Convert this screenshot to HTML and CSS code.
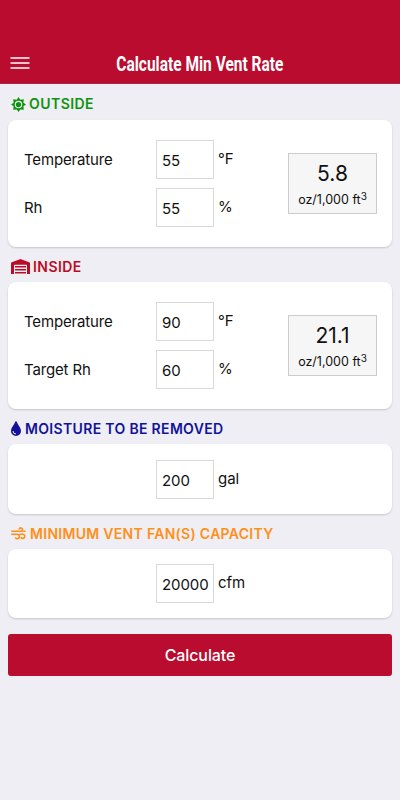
FILE: index.html
```html
<!DOCTYPE html>
<html lang="en">
<head>
<meta charset="utf-8">
<title>Calculate Min Vent Rate</title>
<link rel="stylesheet" href="styles.css">
</head>
<body>
<header class="bar">
  <svg class="menu" viewBox="0 0 20 12" width="20" height="12"><path d="M.5 1h19M.5 6h19M.5 11h19"/></svg>
  <h1 class="title"><span>Calculate Min Vent Rate</span></h1>
</header>
<main>
  <h2 class="heading green">
    <svg class="sun" viewBox="0 0 24 24" width="15" height="15"><path fill="currentColor" fill-rule="evenodd" d="M12 0l2.800 4.200L20.500 3.500l-.7 5.700L24 12l-4.200 2.800.7 5.700-5.700-.7L12 24l-2.800-4.200-5.700.7.700-5.700L0 12l4.200-2.800-.7-5.700 5.700.700zM12 6a6 6 0 100 12 6 6 0 000-12z"/><circle cx="12" cy="12" r="4.200" fill="currentColor"/></svg>
    <span class="label outside">OUTSIDE</span>
  </h2>
  <section class="card climate">
    <div class="rows">
      <label class="row"><span class="name">Temperature</span><input value="55"><span class="unit">°F</span></label>
      <label class="row"><span class="name">Rh</span><input value="55"><span class="unit">%</span></label>
    </div>
    <div class="result"><strong>5.8</strong><small>oz/1,000 ft<sup>3</sup></small></div>
  </section>

  <h2 class="heading red">
    <svg viewBox="0 0 19 15" width="19" height="15"><path fill="currentColor" d="M0 4.500Q0 3.600.8 3.200L9 .2q.5-.2 1 0l8.200 3q.8.400.8 1.300V15h-3V6.500q0-.7-.7-.7H3.700q-.7 0-.7.700V15H0zM4 7h11v1.500H4zM4 10h11v1.500H4zM4 13h11v1.500H4z"/></svg>
    <span class="label inside">INSIDE</span>
  </h2>
  <section class="card climate">
    <div class="rows">
      <label class="row"><span class="name">Temperature</span><input value="90"><span class="unit">°F</span></label>
      <label class="row"><span class="name">Target Rh</span><input value="60"><span class="unit">%</span></label>
    </div>
    <div class="result"><strong>21.1</strong><small>oz/1,000 ft<sup>3</sup></small></div>
  </section>

  <h2 class="heading blue">
    <svg viewBox="0 0 10 15" width="10" height="15"><path fill="currentColor" d="M4.200.7Q5 0 5.800.7C6.500 3.700 10 6.400 10 9.900a5 5 0 01-10 0C0 6.400 3.500 3.700 4.200.7z"/><path class="shine" d="M2 10a3 3 0 003 3"/></svg>
    <span class="label moisture">MOISTURE TO BE REMOVED</span>
  </h2>
  <section class="card single">
    <label class="row"><span class="name"></span><input value="200"><span class="unit">gal</span></label>
  </section>

  <h2 class="heading orange">
    <svg class="wind" viewBox="0 0 15 13" width="15" height="13"><path d="M.8 4.300h9a1.700 1.700 0 10-1.600-2.300M.8 7.300h5.400a2.200 2.200 0 11-1.600 3.700M9 7.200h2.700a2.100 2.100 0 11-1.600 3.500M12.500 4.300h1.500"/></svg>
    <span class="label fans">MINIMUM VENT FAN(S) CAPACITY</span>
  </h2>
  <section class="card single last">
    <label class="row"><span class="name"></span><input value="20000"><span class="unit">cfm</span></label>
  </section>
  <button class="submit">Calculate</button>
</main>
</body>
</html>
```
FILE: styles.css
```css
* { box-sizing: border-box; }
body {
  margin: 0;
  min-height: 800px;
  background: #efeef4;
  color: #111;
  font-family: Inter, "Liberation Sans", sans-serif;
}
.bar {
  height: 84px;
  padding: 42px 10px 0;
  display: grid;
  grid-template-columns: 20px 1fr 20px;
  align-items: center;
  background: #b90c2e;
  border-bottom: 1px solid #a72e40;
}
.menu { stroke: #fff; stroke-width: 1.5; fill: none; }
.title {
  margin: 0;
  padding-top: 2px;
  display: flex;
  justify-content: center;
  font: 700 20px/24px Roboto, sans-serif;
  color: #fff;
  white-space: nowrap;
}
.title span { transform: scaleX(.775); }
main { padding: 0 8px; display: flex; flex-direction: column; }
.heading {
  height: 36px;
  margin: 0;
  padding: 4px 0 0 3px;
  display: flex;
  align-items: center;
  gap: 4px;
  font-size: 14px;
  line-height: 18px;
  font-weight: 600;
  white-space: nowrap;
}
.heading svg { flex: none; }
.green { color: #0e930e; gap: 3px; }
.red { color: #bd0a25; height: 35px; gap: 3px; }
.blue { color: #12129a; height: 35px; }
.orange { color: #ff9017; height: 35px; }
.shine { fill: none; stroke: #efeef4; }
.wind { fill: none; stroke: currentColor; stroke-width: 1.6; stroke-linecap: round; }
.label { letter-spacing: .33px; }
.outside, .inside { letter-spacing: .45px; }
.fans { letter-spacing: .3px; }
.card {
  background: #fff;
  border-radius: 8px;
  box-shadow: 0 1px 2px rgba(0, 0, 0, .18);
}
.climate {
  height: 127px;
  padding: 20px 15px 20px 16px;
  display: flex;
  justify-content: space-between;
  align-items: center;
}
.rows { display: grid; gap: 9px; }
.row {
  display: grid;
  grid-template-columns: 132px 58px auto;
  align-items: center;
  font-size: 15px;
  line-height: 20px;
}
.name { padding-top: 1px; letter-spacing: -.15px; }
.single { height: 70px; padding: 16px; }
.last { height: 69px; padding-top: 15px; }
input {
  width: 58px;
  height: 39px;
  padding: 1px 0 0 5px;
  border: 1px solid #d9d9d9;
  border-radius: 0;
  background: #fff;
  color: #111;
  font: 15px Inter, sans-serif;
  letter-spacing: -.1px;
}
.unit { margin: -2px 0 0 4px; }
.result {
  width: 89px;
  height: 61px;
  padding-top: 8px;
  border: 1px solid #ccc;
  background: #f6f6f6;
  display: flex;
  flex-direction: column;
  align-items: center;
}
.result strong { font-size: 21px; line-height: 24px; font-weight: 400; }
.result small { margin-top: 5px; font-size: 12.5px; line-height: 18px; white-space: nowrap; }
.result sup { font-size: 10px; line-height: 0; vertical-align: 4px; }
.submit {
  height: 42px;
  margin-top: 16px;
  border: 0;
  border-radius: 3px;
  background: #b90c2e;
  color: #fff;
  font: 500 16px Inter, sans-serif;
  letter-spacing: -.1px;
}
```
